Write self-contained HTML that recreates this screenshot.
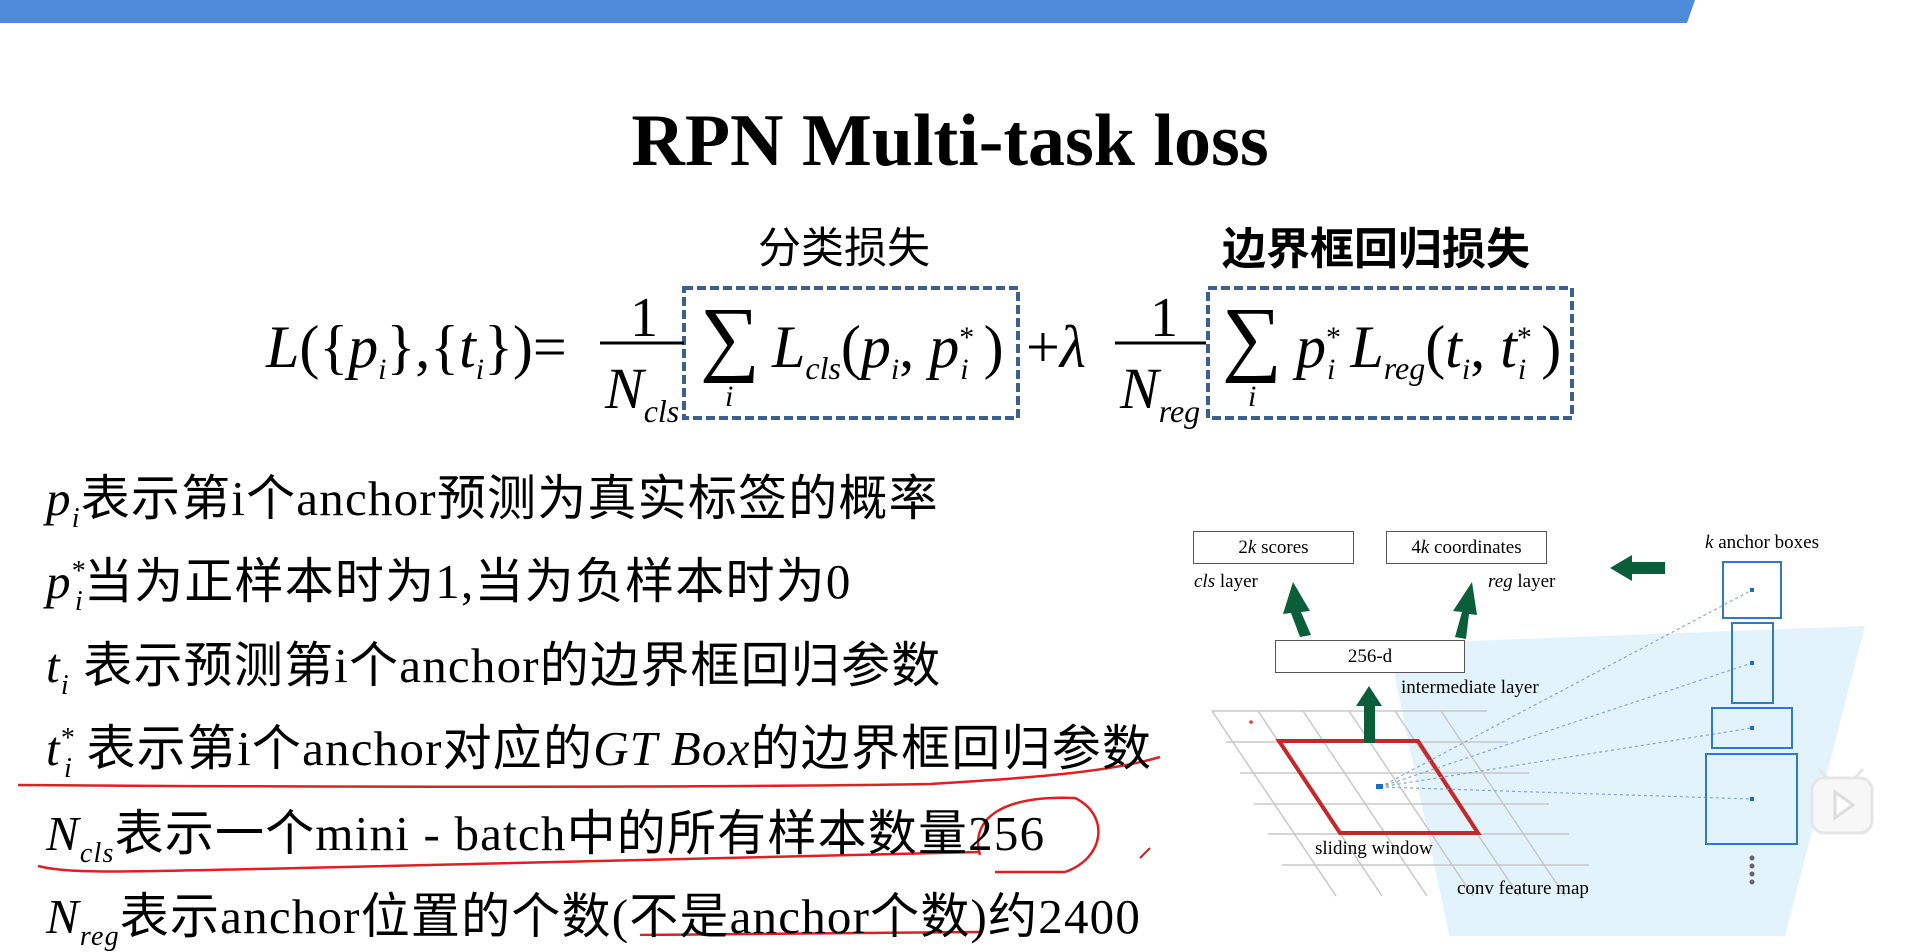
<!DOCTYPE html>
<html><head><meta charset="utf-8"><style>
html,body{margin:0;padding:0;}
body{width:1919px;height:936px;position:relative;overflow:hidden;background:#fff;font-family:"Liberation Serif","Noto Serif CJK SC",serif;color:#000;}
.a{position:absolute;white-space:nowrap;line-height:1;}
.i{font-style:italic;}
.cj{font-family:"Liberation Serif","Noto Sans CJK SC",sans-serif;}
.line{position:absolute;left:46px;font-size:49px;white-space:nowrap;line-height:1;font-family:"Liberation Serif","Noto Sans CJK SC",sans-serif;letter-spacing:1.2px}
.sub{font-size:28px;font-style:italic;position:relative;top:12px}
.box{position:absolute;border:1.5px solid #555;background:#fff;font-size:19px;text-align:center;}
.sm{font-size:19px;position:absolute;white-space:nowrap;font-family:"Liberation Serif",serif;}
</style></head><body>
<svg width="1919" height="936" style="position:absolute;left:0;top:0">
<polygon points="0,0 1695,0 1687,23 0,23" fill="#4f8bd9"/>
<polygon points="1388,644 1865,626 1784,940 1450,940" fill="#e3f3fc"/>
<rect x="684" y="288" width="334" height="130" fill="none" stroke="#3b5f8f" stroke-width="4" stroke-dasharray="9,4"/>
<rect x="1208" y="288" width="364" height="130" fill="none" stroke="#3b5f8f" stroke-width="4" stroke-dasharray="9,4"/>
<line x1="600" y1="343" x2="684" y2="343" stroke="#000" stroke-width="3"/>
<line x1="1115" y1="343" x2="1206" y2="343" stroke="#000" stroke-width="3"/>
<path d="M18,785 C300,787 700,788 930,784 C1030,778 1110,772 1160,757" stroke="#e02020" stroke-width="2.5" fill="none"/>
<path d="M38,866 C70,874 120,872 300,868 C500,864 700,858 980,852 M980,855 C970,820 1000,795 1075,798 C1110,815 1105,858 1065,872 L995,872" stroke="#e02020" stroke-width="2.5" fill="none"/>
<path d="M640,935 L980,932" stroke="#e02020" stroke-width="2.5" fill="none"/>
<path d="M1140,858 L1150,848" stroke="#c02020" stroke-width="2"/>
<g stroke="#c8c8c8" stroke-width="1.5">
<line x1="1212" y1="711" x2="1487" y2="711"/>
<line x1="1226" y1="742" x2="1508" y2="742"/>
<line x1="1240" y1="773" x2="1529" y2="773"/>
<line x1="1254" y1="804" x2="1549" y2="804"/>
<line x1="1268" y1="834" x2="1569" y2="834"/>
<line x1="1282" y1="865" x2="1589" y2="865"/>
<line x1="1212" y1="711" x2="1336" y2="896"/>
<line x1="1258" y1="711" x2="1382" y2="896"/>
<line x1="1303" y1="711" x2="1427" y2="896"/>
<line x1="1349" y1="711" x2="1473" y2="896"/>
<line x1="1395" y1="711" x2="1519" y2="896"/>
<line x1="1441" y1="711" x2="1565" y2="896"/>
</g>
<polygon points="1279,741 1418,741 1478,833 1340,833" fill="none" stroke="#c62828" stroke-width="4"/>
<circle cx="1251" cy="722" r="1.8" fill="#e53935"/>
<g stroke="#8aa6cc" stroke-width="1.2" stroke-dasharray="3,3">
<line x1="1380" y1="787" x2="1752" y2="590"/>
<line x1="1380" y1="787" x2="1752" y2="663"/>
<line x1="1380" y1="787" x2="1752" y2="728"/>
<line x1="1380" y1="787" x2="1752" y2="799"/>
</g>
<rect x="1376" y="784" width="7" height="5" fill="#1e6cc7"/>
<g fill="none" stroke="#2f7ac0" stroke-width="2">
<rect x="1723" y="562" width="58" height="56"/>
<rect x="1732" y="623" width="41" height="80"/>
<rect x="1712" y="708" width="80" height="40"/>
<rect x="1706" y="754" width="91" height="90"/>
</g>
<g fill="#1e6cc7"><rect x="1750" y="588" width="4" height="4"/><rect x="1750" y="661" width="4" height="4"/><rect x="1750" y="726" width="4" height="4"/><rect x="1750" y="797" width="4" height="4"/></g>
<g fill="#666"><circle cx="1752" cy="858" r="2.5"/><circle cx="1752" cy="866" r="2.5"/><circle cx="1752" cy="874" r="2.5"/><circle cx="1752" cy="882" r="2.5"/></g>
<g fill="#0b5e3a">
<polygon points="1665,562 1632,562 1632,555 1610,568 1632,581 1632,574 1665,574"/>
<polygon points="1300,637 1311,635 1301,612 1310,611 1293,582 1283,614 1291,613"/>
<polygon points="1455,637 1466,639 1469,614 1477,615 1472,582 1453,611 1462,612"/>
<polygon points="1364,743 1375,743 1375,706 1382,706 1369,686 1356,706 1364,706"/>
</g>
<g fill="none" stroke="#e6e6e6" stroke-width="3">
<rect x="1812" y="778" width="60" height="55" rx="12" fill="#f7f7f7"/>
<line x1="1827" y1="778" x2="1819" y2="769"/><line x1="1855" y1="778" x2="1863" y2="769"/>
<path d="M1835,792 L1835,818 L1853,805 Z" fill="#fff" stroke="#ddd"/>
</g>
</svg>

<div class="a" style="left:0;width:1900px;text-align:center;top:104px;font-size:74px;font-weight:bold;">RPN Multi-task loss</div>
<div class="a cj" style="left:758px;top:228px;font-size:43px;">分类损失</div>
<div class="a cj" style="left:1222px;top:228px;font-size:44px;font-weight:bold;">边界框回归损失</div>

<div class="a" style="left:266px;top:317px;font-size:60px;"><span class="i">L</span>({<span class="i">p</span><span class="sub" style="font-size:30px">i</span>},{<span class="i">t</span><span class="sub" style="font-size:30px">i</span>})=</div>
<div class="a" style="left:630px;top:290px;font-size:56px;">1</div>
<div class="a i" style="left:605px;top:360px;font-size:58px;">N<span style="font-size:32px;position:relative;top:14px">cls</span></div>
<div class="a" style="left:700px;top:296px;font-size:84px;">∑</div>
<div class="a i" style="left:725px;top:382px;font-size:30px;">i</div>
<div class="a" style="left:772px;top:317px;font-size:60px;"><span class="i">L</span><span class="i" style="font-size:32px;position:relative;top:12px">cls</span>(<span class="i">p</span><span class="sub" style="font-size:30px">i</span>, <span class="i">p</span><span style="font-size:30px;position:relative;top:-20px">*</span><span class="i" style="font-size:30px;position:relative;top:12px;margin-left:-14px">i</span> )</div>
<div class="a" style="left:1026px;top:317px;font-size:60px;">+<span class="i">λ</span></div>
<div class="a" style="left:1150px;top:290px;font-size:56px;">1</div>
<div class="a i" style="left:1120px;top:360px;font-size:58px;">N<span style="font-size:32px;position:relative;top:14px">reg</span></div>
<div class="a" style="left:1222px;top:296px;font-size:84px;">∑</div>
<div class="a i" style="left:1248px;top:382px;font-size:30px;">i</div>
<div class="a" style="left:1296px;top:317px;font-size:60px;"><span class="i">p</span><span style="font-size:30px;position:relative;top:-20px">*</span><span class="i" style="font-size:30px;position:relative;top:12px;margin-left:-14px">i</span> <span class="i">L</span><span class="i" style="font-size:32px;position:relative;top:12px">reg</span>(<span class="i">t</span><span class="sub" style="font-size:30px">i</span>, <span class="i">t</span><span style="font-size:30px;position:relative;top:-20px">*</span><span class="i" style="font-size:30px;position:relative;top:12px;margin-left:-14px">i</span> )</div>

<div class="line" style="top:474px"><span class="i">p</span><span class="sub">i</span>表示第i个anchor预测为真实标签的概率</div>
<div class="line" style="top:557px"><span class="i">p</span><span style="font-size:28px;position:relative;top:-18px">*</span><span class="sub" style="margin-left:-12px">i</span>当为正样本时为1,当为负样本时为0</div>
<div class="line" style="top:641px"><span class="i">t</span><span class="sub">i</span> 表示预测第i个anchor的边界框回归参数</div>
<div class="line" style="top:724px"><span class="i">t</span><span style="font-size:28px;position:relative;top:-18px">*</span><span class="sub" style="margin-left:-12px">i</span> 表示第i个anchor对应的<span class="i">GT Box</span>的边界框回归参数</div>
<div class="line" style="top:809px"><span class="i">N</span><span class="sub">cls</span>表示一个mini - batch中的所有样本数量256</div>
<div class="line" style="top:892px"><span class="i">N</span><span class="sub">reg</span>表示anchor位置的个数(不是anchor个数)约2400</div>

<div class="box" style="left:1193px;top:531px;width:159px;height:31px;line-height:31px;">2<i>k</i> scores</div>
<div class="box" style="left:1386px;top:531px;width:159px;height:31px;line-height:31px;">4<i>k</i> coordinates</div>
<div class="box" style="left:1275px;top:640px;width:188px;height:31px;line-height:31px;">256-d</div>
<div class="sm" style="left:1194px;top:571px;"><i>cls</i> layer</div>
<div class="sm" style="left:1488px;top:571px;"><i>reg</i> layer</div>
<div class="sm" style="left:1705px;top:532px;"><i>k</i> anchor boxes</div>
<div class="sm" style="left:1401px;top:677px;">intermediate layer</div>
<div class="sm" style="left:1315px;top:838px;">sliding window</div>
<div class="sm" style="left:1457px;top:878px;">conv feature map</div>
</body></html>
